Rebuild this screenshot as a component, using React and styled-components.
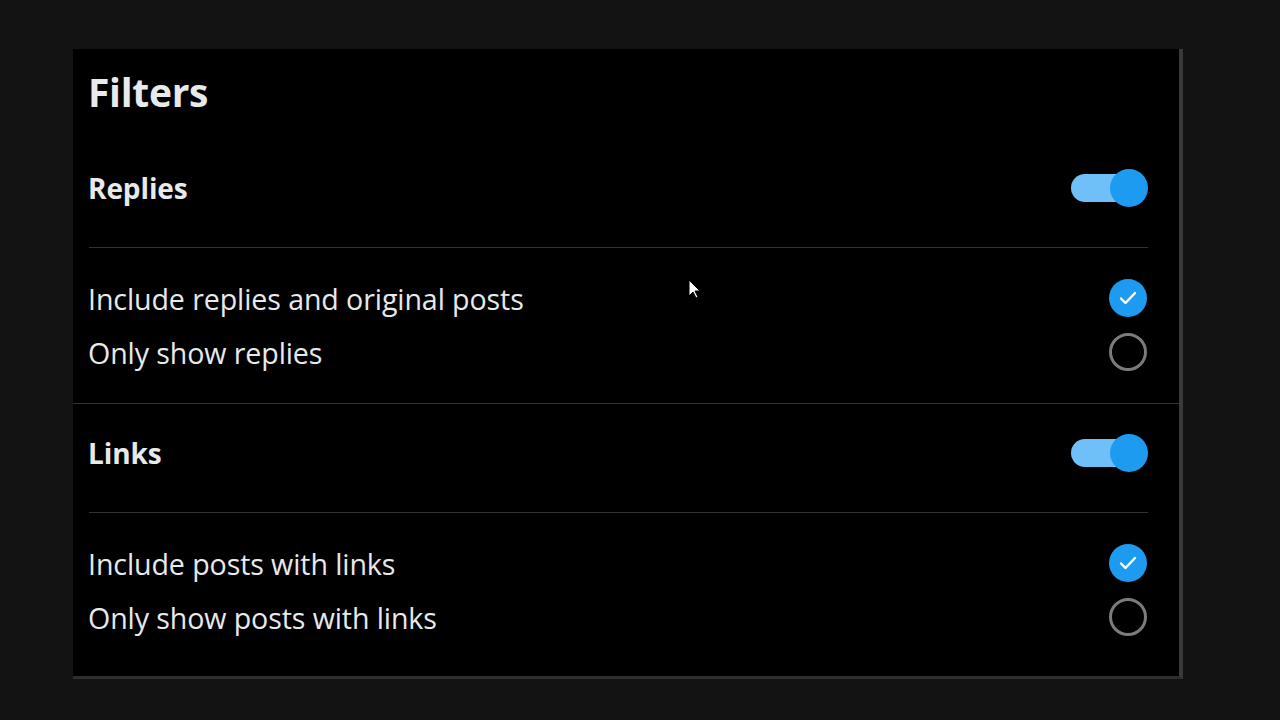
import React from 'react';
import styled, { createGlobalStyle } from 'styled-components';

const GlobalStyle = createGlobalStyle`
	body {
		margin: 0;
		background: #131313;
		font-family: "Open Sans", "Noto Sans", sans-serif;
		color: #e7e9ea;
	}
`;

const Page = styled.div`
	position: relative;
	min-height: 720px;
	padding: 49px 0 0 73px;
	box-sizing: border-box;
`;

const Panel = styled.div`
	width: 1106px;
	background: #000;
	border-right: 4px solid #3a3a3a;
	border-bottom: 3px solid #2e2e2e;
	padding-bottom: 8px;
`;

const Header = styled.div`
	height: 90px;
	box-sizing: border-box;
	padding: 21px 15px 0;
`;

const Title = styled.h2`
	margin: 0;
	font-size: 39px;
	line-height: 44px;
	font-weight: 700;
	letter-spacing: -0.3px;
`;

const Section = styled.section`
	padding: 0 31px 0 16px;
	border-bottom: ${({ $last }) => ($last ? 'none' : '1px solid #333')};
`;

const ToggleRow = styled.div`
	height: 98px;
	display: flex;
	align-items: center;
	justify-content: space-between;
`;

const Label = styled.span`
	margin-left: -1px;
	font-size: 28px;
	font-weight: 700;
	letter-spacing: -0.1px;
`;

const Switch = styled.div`
	position: relative;
	width: 77px;
	height: 38px;
	display: flex;
	align-items: center;
`;

const Track = styled.div`
	width: 70px;
	height: 28px;
	border-radius: 14px;
	background: ${({ $on }) => ($on ? '#6fbff9' : '#555')};
`;

const Knob = styled.div`
	position: absolute;
	top: 0;
	right: ${({ $on }) => ($on ? '0' : 'auto')};
	left: ${({ $on }) => ($on ? 'auto' : '0')};
	width: 38px;
	height: 38px;
	border-radius: 50%;
	background: #1d9bf0;
`;

const Divider = styled.div`
	height: 1px;
	margin-top: 10px;
	background: #2f3336;
`;

const Options = styled.div`
	padding: 23px 0 24px;
`;

const OptionRow = styled.label`
	height: 54px;
	display: flex;
	align-items: center;
	justify-content: space-between;
	cursor: pointer;
`;

const OptionText = styled.span`
	margin-left: -1px;
	font-size: 28.6px;
	font-weight: 400;
	letter-spacing: -0.1px;
`;

const Radio = styled.span`
	width: 38px;
	height: 38px;
	margin-right: 1px;
	box-sizing: border-box;
	border-radius: 50%;
	display: flex;
	align-items: center;
	justify-content: center;
	background: ${({ $checked }) => ($checked ? '#1d9bf0' : 'transparent')};
	border: ${({ $checked }) => ($checked ? 'none' : '3px solid #7b7b7b')};
`;

const Cursor = styled.svg`
	position: absolute;
	left: 688px;
	top: 279px;
`;

const Check = () => (
	<svg width="24" height="24" viewBox="0 0 24 24">
		<path d="M5 12.5l4.5 4.5L19 7" fill="none" stroke="#fff" strokeWidth="2.4" strokeLinecap="round" strokeLinejoin="round" />
	</svg>
);

const sections = [
	{
		name: 'Replies',
		options: [
			{ text: 'Include replies and original posts', checked: true },
			{ text: 'Only show replies', checked: false },
		],
	},
	{
		name: 'Links',
		options: [
			{ text: 'Include posts with links', checked: true },
			{ text: 'Only show posts with links', checked: false },
		],
	},
];

const App = () => {
	return (
		<Page>
			<GlobalStyle />
			<Panel>
				<Header>
					<Title>Filters</Title>
				</Header>
				{sections.map(({ name, options }, i) => (
					<Section key={name} $last={i === sections.length - 1}>
						<ToggleRow>
							<Label>{name}</Label>
							<Switch>
								<Track $on />
								<Knob $on />
							</Switch>
						</ToggleRow>
						<Divider />
						<Options>
							{options.map(({ text, checked }) => (
								<OptionRow key={text}>
									<OptionText>{text}</OptionText>
									<Radio $checked={checked}>{checked && <Check />}</Radio>
								</OptionRow>
							))}
						</Options>
					</Section>
				))}
			</Panel>
			<Cursor width="13" height="20" viewBox="0 0 13 20">
				<path d="M1 1v16l4-4 3 6 2-1-3-6h5z" fill="#fff" stroke="#000" strokeWidth="1" />
			</Cursor>
		</Page>
	);
};

export default App;
